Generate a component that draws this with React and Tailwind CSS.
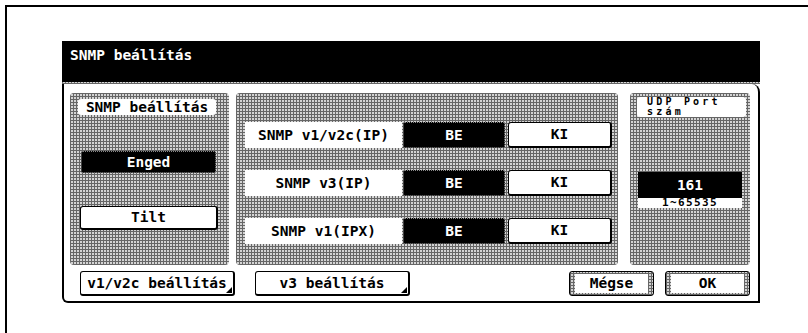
const dither =
  "bg-[#d4d4d4] bg-[image:repeating-linear-gradient(0deg,#666_0_1px,transparent_1px_3px),repeating-linear-gradient(90deg,#666_0_1px,transparent_1px_3px)]";

const Corner = () => (
  <svg className="absolute right-[1px] bottom-[1px]" width="6" height="6" viewBox="0 0 6 6">
    <polygon points="6,0 6,6 0,6" fill="#000" />
  </svg>
);

// fehér gomb, vastagabb jobb/alsó szegéllyel
const WhiteBtn = ({ w, h, children, corner, className = "" }) => (
  <div
    className={`relative flex items-center justify-center bg-white border border-black border-r-2 border-b-2 rounded-[3px] ${className}`}
    style={{ width: w, height: h }}
  >
    {children}
    {corner && <Corner />}
  </div>
);

const BlackBtn = ({ w, h, children, className = "" }) => (
  <div
    className={`flex items-center justify-center bg-black text-white border border-dotted border-[#888] rounded-[2px] ${className}`}
    style={{ width: w, height: h }}
  >
    {children}
  </div>
);

const GreyBtn = ({ children }) => (
  <div className={`w-[85px] h-[25px] border border-black rounded-[3px] px-[5px] py-[2px] ${dither}`}>
    <div className="h-full bg-white flex items-center justify-center">{children}</div>
  </div>
);

const rows = ["SNMP v1/v2c(IP)", "SNMP v3(IP)", "SNMP v1(IPX)"];

export default function App() {
  return (
    <div className="w-[808px] h-[333px] bg-white pl-[5px] pt-[5px] overflow-hidden text-black text-[14.5px] font-bold leading-none font-['DejaVu_Sans_Mono','Liberation_Mono',monospace]">
      <div className="h-full border-l-2 border-t-2 border-black pl-[55px] pt-[34px]">
        <div className="w-[698px]">
          <div className="h-[41px] bg-black text-white pl-2 pt-[7px]">SNMP beállítás</div>
          <div className={`h-[2px] ${dither}`}></div>
          <div className="h-[219px] bg-white border-l-2 border-b-2 border-r-2 border-black rounded-bl-[6px] rounded-tr-[8px] pl-[6px] pt-[9px]">
            <div className="flex h-[172px]">
              {/* bal panel */}
              <div className={`w-[159px] rounded-[4px] ${dither} pt-[6px]`}>
                <div className="ml-[8px] w-[138px] h-[16px] bg-white rounded-[3px] flex items-center justify-center">
                  SNMP beállítás
                </div>
                <BlackBtn w={135} h={22} className="ml-[11px] mt-[36px]">Enged</BlackBtn>
                <WhiteBtn w={138} h={24} className="ml-[10px] mt-[33px]">Tilt</WhiteBtn>
              </div>

              {/* középső panel */}
              <div className={`w-[382px] ml-[7px] rounded-[4px] ${dither} pt-[29px] pl-[9px] flex flex-col gap-[22px]`}>
                {rows.map((r) => (
                  <div key={r} className="flex h-[26px]">
                    <div className="w-[157px] bg-white flex items-center justify-center">{r}</div>
                    <BlackBtn w={102} h={26} className="ml-[1px]">BE</BlackBtn>
                    <WhiteBtn w={104} h={26} className="ml-[3px]">KI</WhiteBtn>
                  </div>
                ))}
              </div>

              {/* jobb panel */}
              <div className={`w-[120px] ml-[12px] rounded-[4px] ${dither} pt-[4px]`}>
                <div className="ml-[7px] w-[109px] h-[20px] bg-white rounded-[3px] pl-[10px] text-[10px] leading-[10px] tracking-[3.2px]">
                  UDP Port
                  <br />
                  szám
                </div>
                <div className="ml-[8px] mt-[55px] w-[104px]">
                  <div className="h-[26px] bg-black text-white flex items-center justify-center">161</div>
                  <div className="h-[10px] bg-white text-[11px] leading-[10px] tracking-[1.4px] text-center">1~65535</div>
                </div>
              </div>
            </div>

            {/* alsó gombsor */}
            <div className="flex items-center mt-[6px] pl-[10px]">
              <WhiteBtn w={155} h={25} corner>v1/v2c beállítás</WhiteBtn>
              <WhiteBtn w={155} h={25} corner className="ml-[20px]">v3 beállítás</WhiteBtn>
              <div className="ml-auto mr-[8px] flex gap-[11px]">
                <GreyBtn>Mégse</GreyBtn>
                <GreyBtn>OK</GreyBtn>
              </div>
            </div>
          </div>
        </div>
      </div>
    </div>
  );
}
